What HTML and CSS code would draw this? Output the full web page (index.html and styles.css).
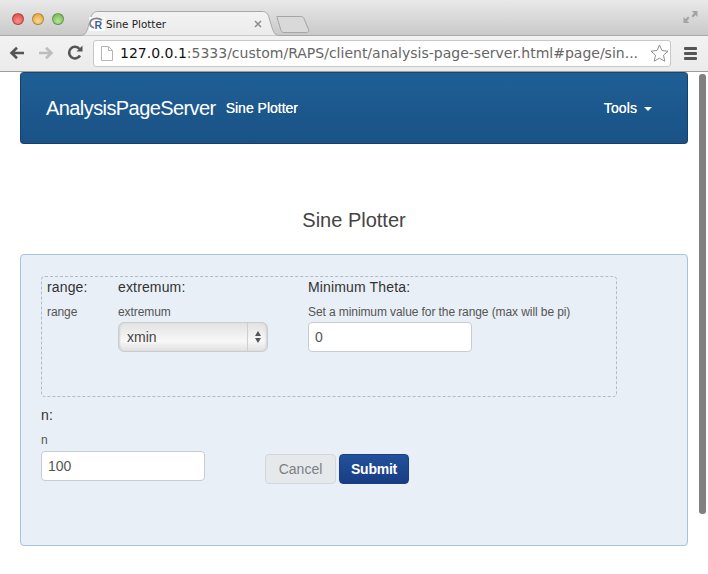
FILE: index.html
```html
<!DOCTYPE html>
<html lang="en">
<head>
<meta charset="utf-8">
<title>Sine Plotter</title>
<link rel="stylesheet" href="styles.css">
</head>
<body>
<header class="browser">
  <div class="titlebar">
    <div class="lights">
      <span class="light red"></span>
      <span class="light amber"></span>
      <span class="light green"></span>
    </div>
    <div class="tab">
      <svg class="tab-shape" width="202" height="25" viewBox="0 0 202 25"><path d="M0 24.5c6 0 7-2 9-8l3-10c1-4 3-6 7-6h164c4 0 6 2 7 6l3 10c2 6 3 8 9 8" fill="url(#tabfill)" stroke="#a8a8a8"/><defs><linearGradient id="tabfill" x1="0" y1="0" x2="0" y2="1"><stop offset="0" stop-color="#f3f3f3"/><stop offset="1" stop-color="#ebebeb"/></linearGradient></defs></svg>
      <svg class="favicon" width="16" height="14" viewBox="0 0 16 14"><rect width="16" height="14" fill="#fbfbfb"/><path d="M13 3.200C11.500 1.800 9.500 1.300 7.500 1.300 3.500 1.300 1 3.500 1 6.300c0 2.300 1.700 3.900 4 4.500" fill="none" stroke="#7d818a" stroke-width="1.800"/><text x="5.500" y="11.500" class="favicon-r">R</text></svg>
      <span class="tab-title">Sine Plotter</span>
      <svg class="tab-close" width="8" height="8" viewBox="0 0 8 8"><path d="M1 1l6 6M7 1l-6 6" stroke="#8c8c8c" stroke-width="1.500"/></svg>
    </div>
    <svg class="new-tab" width="34" height="19" viewBox="0 0 34 19"><path d="M.8 1.500h24c1.500 0 2.500.6 3.200 2l4.500 11c.6 1.800-.2 3-2 3H8c-1.500 0-2.500-.8-3-2L.8 1.500z" fill="#d9d9d9" stroke="#a5a5a5"/></svg>
    <svg class="fullscreen" width="15" height="14" viewBox="0 0 15 14"><path d="M8.500 1h6v6l-2-2-2.500 2.500-1.500-1.500L11 3z" fill="#a3a3a3"/><path d="M6.500 13h-6V7l2 2L5 6.500 6.500 8 4 11z" fill="#a3a3a3"/></svg>
  </div>
  <div class="toolbar">
    <svg class="nav-icon" width="16" height="14" viewBox="0 0 16 14"><path d="M15 7H3M8 1.800L2.500 7 8 12.200" fill="none" stroke="#555" stroke-width="2.600"/></svg>
    <svg class="nav-icon" width="16" height="14" viewBox="0 0 16 14"><path d="M1 7h12M8 1.800L13.500 7 8 12.200" fill="none" stroke="#bdbdbd" stroke-width="2.600"/></svg>
    <svg class="nav-icon" width="16" height="16" viewBox="0 0 16 16"><path d="M13 10.500A5.800 5.800 0 1 1 12.500 4" fill="none" stroke="#555" stroke-width="2.600"/><path d="M9.500 6.500h6v-6z" fill="#555"/></svg>
    <div class="omnibox">
      <svg class="page-icon" width="12" height="15" viewBox="0 0 12 15"><path d="M.5.500h7l4 4v10H.500zM7.500.500v4h4" fill="#fff" stroke="#b5b5b5"/></svg>
      <span class="url"><span class="url-host">127.0.0.1</span>:5333/custom/RAPS/client/analysis-page-server.html#page/sin...</span>
      <svg class="star" width="19" height="18" viewBox="0 0 19 18"><path d="M9.500 1l2.500 5.500 6 .7-4.500 4 1.300 6-5.300-3-5.300 3 1.300-6-4.500-4 6-.7z" fill="#fff" stroke="#8f8f8f"/></svg>
    </div>
    <div class="menu-icon"><span></span><span></span><span></span></div>
  </div>
</header>

<div class="scrollbar"></div>

<main class="page">
  <nav class="navbar">
    <a class="brand">AnalysisPageServer</a>
    <a class="nav-link">Sine Plotter</a>
    <a class="nav-link tools">Tools <span class="caret"></span></a>
  </nav>

  <h1 class="page-title">Sine Plotter</h1>

  <form class="panel">
    <fieldset class="range-group">
      <div class="field field-range">
        <div class="field-name">range:</div>
        <div class="field-hint">range</div>
      </div>
      <div class="field field-extremum">
        <div class="field-name">extremum:</div>
        <div class="field-hint">extremum</div>
        <div class="select">
          <span class="select-value">xmin</span>
          <span class="select-arrows"><i class="up"></i><i class="down"></i></span>
        </div>
      </div>
      <div class="field">
        <div class="field-name">Minimum Theta:</div>
        <div class="field-hint">Set a minimum value for the range (max will be pi)</div>
        <input class="text-input" type="text" value="0">
      </div>
    </fieldset>
    <div class="bottom-row">
      <div class="field field-n">
        <div class="field-name">n:</div>
        <div class="field-hint">n</div>
        <input class="text-input" type="text" value="100">
      </div>
      <div class="actions">
        <button class="btn btn-cancel" type="button">Cancel</button>
        <button class="btn btn-submit" type="button">Submit</button>
      </div>
    </div>
  </form>
</main>
</body>
</html>
```
FILE: styles.css
```css
* { box-sizing: border-box; }
html, body { margin: 0; padding: 0; }
body {
  width: 708px;
  height: 574px;
  overflow: hidden;
  background: #fff;
  font-family: "Liberation Sans", Arial, sans-serif;
  color: #333;
  position: relative;
}

/* browser chrome */
.browser { height: 72px; display: flex; flex-direction: column; }
.titlebar {
  height: 36px;
  display: flex;
  align-items: flex-start;
  background: linear-gradient(#e9e9e9, #c9c9c9);
  border-bottom: 1px solid #a9a9a9;
  position: relative;
}
.lights { display: flex; gap: 8px; padding: 13px 0 0 12px; width: 79px; }
.light { width: 12px; height: 12px; border-radius: 50%; border: 1px solid rgba(0,0,0,.25); }
.red { background: radial-gradient(circle at 50% 70%, #ff8f8a, #d8403c); }
.amber { background: radial-gradient(circle at 50% 70%, #ffd98a, #dd9a34); }
.green { background: radial-gradient(circle at 50% 70%, #b5e88e, #6cae50); }
.tab {
  width: 202px;
  height: 25px;
  margin-top: 11px;
  position: relative;
  display: flex;
  align-items: center;
  padding: 1px 0 0 10px;
  z-index: 1;
}
.tab-shape { position: absolute; left: 0; top: 0; }
.favicon { position: relative; flex: none; }
.favicon-r { font: bold 10.5px "Liberation Sans", sans-serif; fill: #3d5f9c; }
.tab-title {
  position: relative;
  font: 10.4px "DejaVu Sans", sans-serif;
  color: #222;
  margin-left: 1px;
  width: 148px;
}
.tab-close { position: relative; }
.new-tab { margin: 15px 0 0 -5px; }
.fullscreen { position: absolute; right: 10px; top: 10px; }
.toolbar {
  height: 36px;
  display: flex;
  align-items: center;
  padding: 0 0 1px 9px;
  gap: 13px;
  background: linear-gradient(#f2f2f2, #ebebeb);
  border-bottom: 1px solid #9d9d9d;
}
.nav-icon { flex: none; }
.omnibox {
  width: 578px;
  height: 27px;
  margin-left: -3px;
  display: flex;
  align-items: center;
  padding-left: 7px;
  background: #fff;
  border: 1px solid #c8c8c8;
  border-radius: 3px;
}
.page-icon { flex: none; }
.url {
  font: 14px "DejaVu Sans", sans-serif;
  color: #666;
  margin-left: 7px;
  width: 530px;
  white-space: nowrap;
  overflow: hidden;
}
.url-host { color: #111; }
.star { flex: none; }
.menu-icon { display: flex; flex-direction: column; gap: 2px; }
.menu-icon span { display: block; width: 13px; height: 3px; background: #555; border-radius: 1px; }

.scrollbar {
  position: absolute;
  right: 2px;
  top: 74px;
  width: 7px;
  height: 440px;
  background: #808080;
  border-radius: 3px;
}

/* page */
.page { padding: 0 20px; }
.navbar {
  height: 72px;
  display: flex;
  align-items: center;
  padding: 0 35px 0 25px;
  background: linear-gradient(#1f5f96, #1a5285);
  border: 1px solid #15406a;
  border-top-color: #17466f;
  border-radius: 4px;
  color: #fff;
}
.brand { font-size: 20px; letter-spacing: -.58px; }
.nav-link { font-size: 14px; margin-left: 10px; text-shadow: 0 0 .6px #fff; }
.tools { margin-left: auto; display: flex; align-items: center; gap: 7px; letter-spacing: .1px; }
.caret {
  width: 0;
  height: 0;
  border-left: 4px solid transparent;
  border-right: 4px solid transparent;
  border-top: 4px solid #fff;
  margin-top: 2px;
}
.page-title {
  margin: 0;
  padding-top: 62px;
  height: 110px;
  text-align: center;
  font-size: 20px;
  font-weight: 400;
  line-height: 28px;
  color: #444;
}
.panel {
  height: 292px;
  padding: 21px 20px;
  background: #e8eff6;
  border: 1px solid #a9c1d9;
  border-radius: 4px;
}
.range-group {
  margin: 0;
  padding: 0 5px;
  width: 576px;
  height: 121px;
  display: flex;
  border: 1px dashed #b3bbc4;
  border-radius: 4px;
}
.field-range { width: 71px; }
.field-extremum { width: 190px; }
.field-name { font-size: 14px; line-height: 20px; color: #333; letter-spacing: .15px; }
.field-hint { font-size: 12px; line-height: 16px; margin-top: 7px; height: 18px; color: #555; letter-spacing: -.09px; }
.field-n .text-input { margin-top: 1px; }
.select {
  width: 150px;
  height: 30px;
  display: flex;
  align-items: center;
  justify-content: space-between;
  border: 1px solid #c9cdd1;
  border-radius: 6px;
  background: linear-gradient(#e2e2e2, #f8f8f8 65%, #e0e0e0);
  box-shadow: inset 2px 0 2px -1px #d0d0d0, inset -2px 0 2px -1px #d0d0d0;
  font-size: 14px;
  color: #444;
}
.select-value { padding-left: 8px; }
.select-arrows {
  width: 20px;
  height: 28px;
  border-left: 1px solid #cfcfcf;
  display: flex;
  flex-direction: column;
  align-items: center;
  justify-content: center;
  gap: 2px;
}
.select-arrows i { width: 0; height: 0; border-left: 3.500px solid transparent; border-right: 3.500px solid transparent; }
.select-arrows .up { border-bottom: 5px solid #555; }
.select-arrows .down { border-top: 5px solid #555; }
.text-input {
  display: block;
  width: 164px;
  height: 30px;
  padding: 0 6px;
  background: #fff;
  border: 1px solid #c8ccd0;
  border-radius: 4px;
  font: 14px "Liberation Sans", sans-serif;
  color: #555;
  outline: none;
}
.bottom-row { display: flex; padding-top: 8px; }
.actions { display: flex; gap: 3px; margin: 49px 0 0 60px; }
.btn {
  height: 30px;
  width: 71px;
  padding: 0;
  border-radius: 4px;
  font: 14px "Liberation Sans", sans-serif;
}
.btn-cancel { background: #e6e9ec; border: 1px solid #d3d7db; color: #7d7f82; }
.btn-submit {
  width: 70px;
  background: linear-gradient(#22529a, #183c84);
  border: 1px solid #193f86;
  color: #fff;
  font-weight: 700;
  letter-spacing: -.25px;
}
```
